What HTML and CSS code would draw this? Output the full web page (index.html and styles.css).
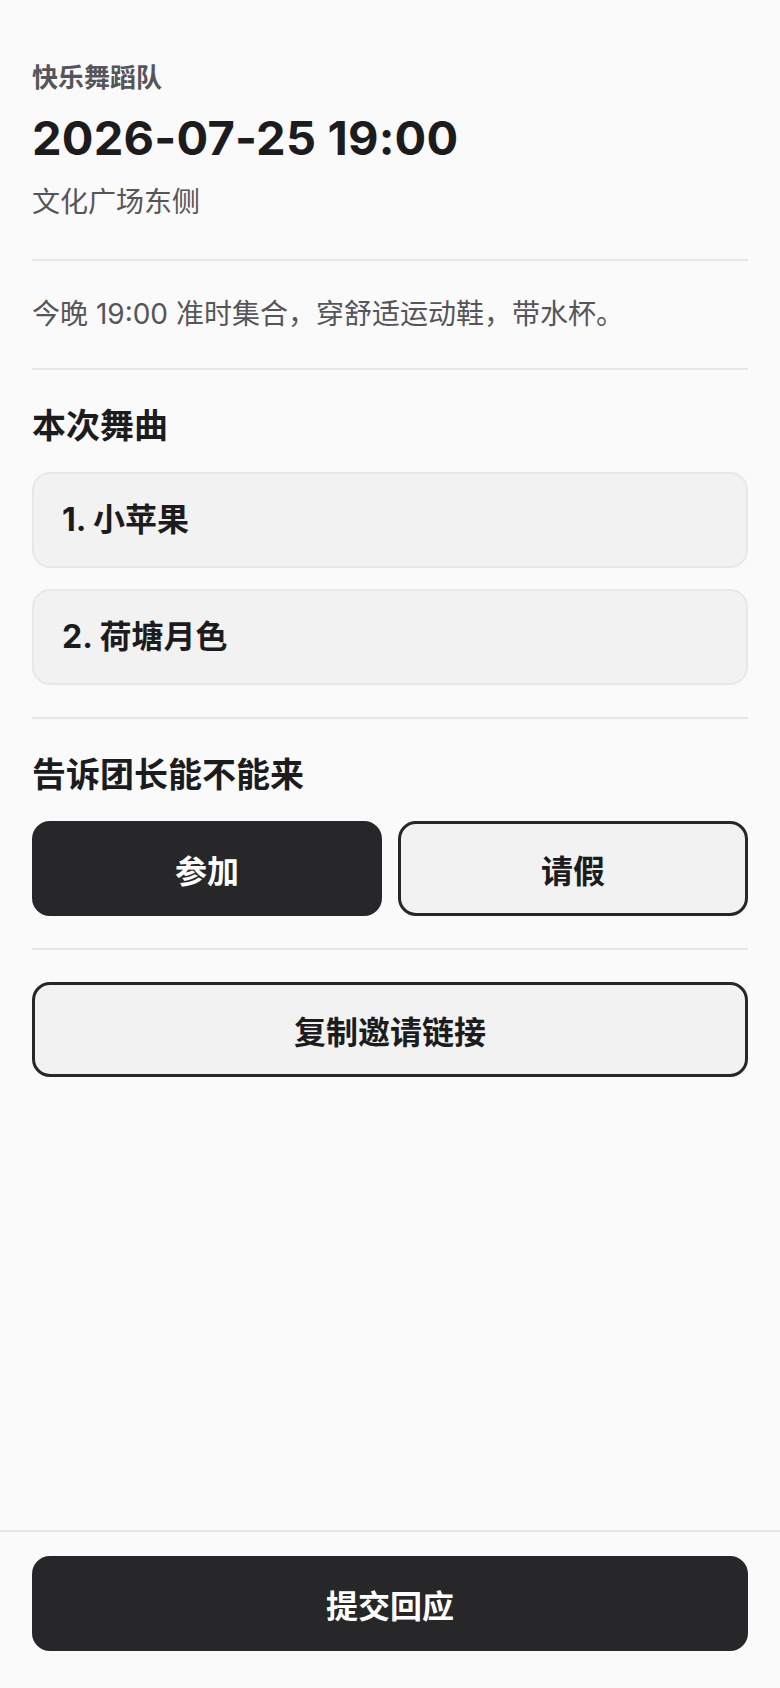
FILE: index.html
```html
<!DOCTYPE html>
<html lang="zh-CN">
<head>
<meta charset="UTF-8">
<meta name="viewport" content="width=device-width, initial-scale=1.0">
<title>快乐舞蹈队 · 排练</title>
<link rel="stylesheet" href="styles.css">
</head>
<body>
<div class="page">
  <main class="content">
    <header class="event-head">
      <div class="team">快乐舞蹈队</div>
      <h1 class="when">2026-07-25 19:00</h1>
      <div class="where">文化广场东侧</div>
    </header>

    <section class="block">
      <p class="note">今晚 19:00 准时集合，穿舒适运动鞋，带水杯。</p>
    </section>

    <section class="block">
      <h2 class="block-title">本次舞曲</h2>
      <ul class="songs">
        <li class="song">1. 小苹果</li>
        <li class="song">2. 荷塘月色</li>
      </ul>
    </section>

    <section class="block">
      <h2 class="block-title">告诉团长能不能来</h2>
      <div class="choices">
        <button class="btn btn-dark" type="button">参加</button>
        <button class="btn btn-light" type="button">请假</button>
      </div>
    </section>

    <section class="block">
      <button class="btn btn-light btn-wide" type="button">复制邀请链接</button>
    </section>
  </main>

  <footer class="bottom-bar">
    <button class="btn btn-dark btn-wide" type="button">提交回应</button>
  </footer>
</div>
</body>
</html>
```

FILE: styles.css
```css
* {
  box-sizing: border-box;
}
body {
  margin: 0;
  background: #fafafa;
  color: #1c1c1e;
  font-family: Inter, "Noto Sans CJK SC", sans-serif;
}
.page {
  display: flex;
  flex-direction: column;
  min-height: 100vh;
}
.content {
  flex: 1;
  padding: 0 32px;
}

.event-head {
  padding: 60px 0 36px;
}
.team {
  font-size: 26px;
  line-height: 36px;
  font-weight: 600;
  color: #55555a;
}
.when {
  margin: 14px 0 0;
  font-size: 47px;
  line-height: 55px;
  font-weight: 700;
  letter-spacing: 0.2px;
}
.where {
  margin-top: 16px;
  font-size: 28px;
  line-height: 42px;
  color: #55555a;
}

.block {
  border-top: 2px solid #e6e6e6;
  padding: 32px 0;
}
.note {
  margin: 0;
  font-size: 28px;
  line-height: 43px;
  color: #55555a;
}
.block-title {
  margin: 0 0 22px;
  font-size: 34px;
  line-height: 48px;
  font-weight: 700;
}

.songs {
  list-style: none;
  margin: 0;
  padding: 0;
  display: flex;
  flex-direction: column;
  gap: 21px;
}
.song {
  background: #f2f2f2;
  border: 2px solid #e8e8e8;
  border-radius: 18px;
  padding: 24px 28px;
  font-size: 32px;
  line-height: 44px;
  font-weight: 700;
}

.choices {
  display: grid;
  grid-template-columns: 1fr 1fr;
  gap: 16px;
  margin-top: 2px;
}
.btn {
  display: block;
  height: 95px;
  border-radius: 18px;
  border: 3px solid #27272a;
  font-family: inherit;
  font-size: 32px;
  font-weight: 700;
  cursor: pointer;
}
.btn-dark {
  background: #27272a;
  color: #fff;
}
.btn-light {
  background: #f2f2f2;
  color: #1c1c1e;
}
.btn-wide {
  width: 100%;
}

.bottom-bar {
  border-top: 2px solid #e6e6e6;
  padding: 24px 32px 37px;
}
```
